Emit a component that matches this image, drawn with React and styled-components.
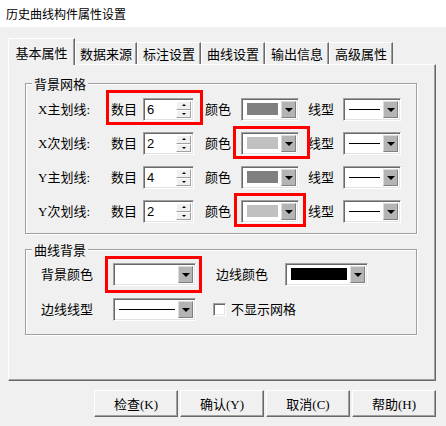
import React from "react";
import styled, { createGlobalStyle, css } from "styled-components";

const GlobalStyle = createGlobalStyle`
  html, body {
    margin: 0;
    padding: 0;
    background: #f0f0f0;
  }
  body {
    font-family: "Liberation Serif", "Noto Sans CJK SC", serif;
    font-size: 13px;
    color: #000;
  }
`;

const sunken = css`
  box-sizing: border-box;
  border: 1px solid;
  border-color: #a0a0a0 #ffffff #ffffff #a0a0a0;
  box-shadow: inset 1px 1px 0 #696969, inset -1px -1px 0 #e3e3e3;
`;

const Dialog = styled.div`
  width: 446px;
  height: 426px;
  background: #f0f0f0;
  display: flex;
  flex-direction: column;
`;

const TitleBar = styled.div`
  height: 27px;
  background: #fff;
  display: flex;
  align-items: center;
  padding-left: 6px;
  font-family: "Noto Sans CJK SC", sans-serif;
  font-size: 12px;
`;

const Body = styled.div`
  padding: 11px 10px 0 8px;
  display: flex;
  flex-direction: column;
`;

const TabBar = styled.div`
  display: flex;
  align-items: flex-end;
  height: 26px;
`;

const Tab = styled.div`
  box-sizing: border-box;
  width: ${(p) => p.$w}px;
  height: ${(p) => (p.$active ? 27 : 22)}px;
  margin-bottom: ${(p) => (p.$active ? -1 : 0)}px;
  z-index: ${(p) => (p.$active ? 2 : 1)};
  display: flex;
  align-items: center;
  justify-content: center;
  background: #f0f0f0;
  border-top: 1px solid #fff;
  border-left: 1px solid #fff;
  border-right: 1px solid #696969;
  box-shadow: inset -1px 0 0 #a0a0a0;
  font-family: "Noto Sans CJK SC", sans-serif;
  line-height: 15px;
`;

const Panel = styled.div`
  box-sizing: border-box;
  width: 428px;
  height: 317px;
  border: 1px solid;
  border-color: #fff #696969 #696969 #fff;
  box-shadow: inset -1px -1px 0 #a0a0a0;
  padding: 11px 0 0 16px;
  display: flex;
  flex-direction: column;
  gap: 8px;
`;

const Group = styled.fieldset`
  box-sizing: border-box;
  width: 392px;
  margin: 0;
  padding: ${(p) => p.$pad};
  border: 1px solid #a0a0a0;
  box-shadow: inset 1px 1px 0 #fff, 1px 1px 0 #fff;
  display: flex;
  flex-direction: column;
  gap: ${(p) => p.$gap}px;
`;

const Legend = styled.legend`
  margin-left: 6px;
  padding: 0 2px;
  background: #f0f0f0;
  font-family: "Noto Sans CJK SC", sans-serif;
  line-height: 15px;
`;

const Row = styled.div`
  display: flex;
  align-items: center;
  height: 23px;
  padding-left: ${(p) => p.$indent}px;
`;

const Label = styled.span`
  width: ${(p) => p.$w}px;
  margin-left: ${(p) => p.$ml || 0}px;
  flex: none;
  white-space: nowrap;
  line-height: 15px;
`;

const Marked = styled.div`
  position: relative;
  display: flex;
  align-items: center;
  height: 23px;
  margin-left: ${(p) => p.$ml || 0}px;
`;

const Mark = styled.div`
  position: absolute;
  top: ${(p) => p.$t}px;
  right: ${(p) => p.$r}px;
  bottom: ${(p) => p.$b}px;
  left: ${(p) => p.$l}px;
  border: 3px solid #ff0000;
  pointer-events: none;
`;

const SpinBox = styled.div`
  ${sunken};
  width: 51px;
  height: 23px;
  padding: 2px;
  display: flex;
  background: #fff;
`;

const SpinText = styled.span`
  flex: 1;
  padding-left: 1px;
  line-height: 18px;
  font-family: "Liberation Sans", sans-serif;
`;

const SpinCol = styled.div`
  width: 15px;
  display: flex;
  flex-direction: column;
`;

const SpinBtn = styled.div`
  box-sizing: border-box;
  flex: 1;
  display: flex;
  align-items: center;
  justify-content: center;
  background: #f0f0f0;
  border: 1px solid;
  border-color: #fff #a0a0a0 #a0a0a0 #fff;
  &::before {
    content: "";
    border-left: 2px solid transparent;
    border-right: 2px solid transparent;
    ${(p) =>
      p.$up
        ? "border-bottom: 2px solid #000;"
        : "border-top: 2px solid #000;"}
  }
`;

const Combo = styled.div`
  ${sunken};
  width: ${(p) => p.$w}px;
  height: 23px;
  padding: 2px;
  display: flex;
  align-items: stretch;
  background: #fff;
  flex: none;
`;

const Swatch = styled.div`
  flex: 1;
  margin: 2px 3px 3px 3px;
  background: ${(p) => p.$color};
`;

const LineSample = styled.div`
  flex: 1;
  align-self: center;
  margin: 0 3px;
  height: 1px;
  background: #000;
`;

const DropBtn = styled.div`
  box-sizing: border-box;
  width: 15px;
  display: flex;
  align-items: center;
  justify-content: center;
  background: #b4b4b4;
  border: 1px solid;
  border-color: #dcdcdc #808080 #808080 #dcdcdc;
  &::before {
    content: "";
    border-left: 4px solid transparent;
    border-right: 4px solid transparent;
    border-top: 4px solid #000;
  }
`;

const Check = styled.span`
  ${sunken};
  width: 13px;
  height: 13px;
  background: #fff;
  margin-left: 17px;
  margin-right: 5px;
  flex: none;
`;

const ButtonBar = styled.div`
  display: flex;
  justify-content: flex-end;
  gap: 2px;
  margin-top: 9px;
`;

const Button = styled.button`
  box-sizing: border-box;
  width: 84px;
  height: 27px;
  padding: 0;
  background: #f0f0f0;
  border: 1px solid;
  border-color: #fff #696969 #696969 #fff;
  box-shadow: inset -1px -1px 0 #a0a0a0;
  font-family: "Liberation Serif", "Noto Sans CJK SC", serif;
  font-size: 13px;
  color: #000;
`;

const tabs = [
  { name: "基本属性", w: 67, active: true },
  { name: "数据来源", w: 62 },
  { name: "标注设置", w: 64 },
  { name: "曲线设置", w: 64 },
  { name: "输出信息", w: 64 },
  { name: "高级属性", w: 64 },
];

const gridRows = [
  { label: "X主划线:", count: 6, color: "#808080", spinMark: [-8, -9, -4, -5] },
  { label: "X次划线:", count: 2, color: "#c0c0c0", colorMark: [-6, -11, -4, -8] },
  { label: "Y主划线:", count: 4, color: "#808080" },
  { label: "Y次划线:", count: 2, color: "#c0c0c0", colorMark: [-7, -7, -4, -7] },
];

const ColorCombo = ({ color }) => (
  <Combo $w={58}>
    <Swatch $color={color} />
    <DropBtn />
  </Combo>
);

const LineCombo = ({ w }) => (
  <Combo $w={w}>
    <LineSample />
    <DropBtn />
  </Combo>
);

const MarkBox = ({ m }) => <Mark $t={m[0]} $r={m[1]} $b={m[2]} $l={m[3]} />;

const GridRow = ({ row }) => {
  const spin = (
    <>
      <Label $w={32}>数目</Label>
      <SpinBox>
        <SpinText>{row.count}</SpinText>
        <SpinCol>
          <SpinBtn $up />
          <SpinBtn />
        </SpinCol>
      </SpinBox>
    </>
  );
  return (
    <Row $indent={12}>
      <Label $w={73}>{row.label}</Label>
      {row.spinMark ? (
        <Marked>
          {spin}
          <MarkBox m={row.spinMark} />
        </Marked>
      ) : (
        spin
      )}
      <Label $w={36} $ml={11}>颜色</Label>
      {row.colorMark ? (
        <Marked>
          <ColorCombo color={row.color} />
          <MarkBox m={row.colorMark} />
        </Marked>
      ) : (
        <ColorCombo color={row.color} />
      )}
      <Label $w={35} $ml={9}>线型</Label>
      <LineCombo w={58} />
    </Row>
  );
};

export default function App() {
  return (
    <Dialog>
      <GlobalStyle />
      <TitleBar>历史曲线构件属性设置</TitleBar>
      <Body>
        <TabBar>
          {tabs.map((t) => (
            <Tab key={t.name} $w={t.w} $active={t.active}>
              {t.name}
            </Tab>
          ))}
        </TabBar>
        <Panel>
          <Group $pad="7px 0 10px 0" $gap={11}>
            <Legend>背景网格</Legend>
            {gridRows.map((r) => (
              <GridRow key={r.label} row={r} />
            ))}
          </Group>
          <Group $pad="6px 0 13px 0" $gap={12}>
            <Legend>曲线背景</Legend>
            <Row $indent={15}>
              <Label $w={72}>背景颜色</Label>
              <Marked>
                <Combo $w={83}>
                  <Swatch $color="#fff" />
                  <DropBtn />
                </Combo>
                <MarkBox m={[-7, -6, -7, -8]} />
              </Marked>
              <Label $w={69} $ml={20}>边线颜色</Label>
              <Combo $w={83}>
                <Swatch $color="#000" />
                <DropBtn />
              </Combo>
            </Row>
            <Row $indent={15}>
              <Label $w={72}>边线线型</Label>
              <LineCombo w={83} />
              <Check />
              <Label $w={80}>不显示网格</Label>
            </Row>
          </Group>
        </Panel>
        <ButtonBar>
          <Button>检查(K)</Button>
          <Button>确认(Y)</Button>
          <Button>取消(C)</Button>
          <Button>帮助(H)</Button>
        </ButtonBar>
      </Body>
    </Dialog>
  );
}
